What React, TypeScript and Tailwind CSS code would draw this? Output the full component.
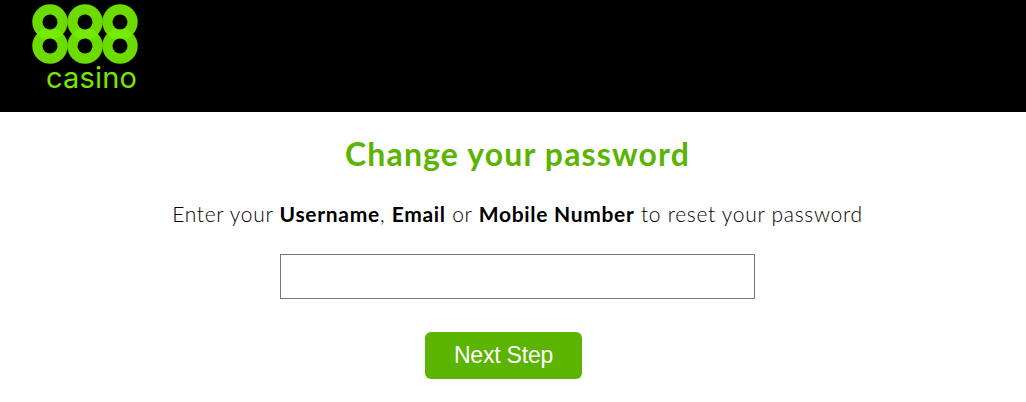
const rings = [
  { cx: 50, cy: 22 },
  { cx: 85, cy: 22 },
  { cx: 120, cy: 22 },
  { cx: 50, cy: 46 },
  { cx: 85, cy: 46 },
  { cx: 120, cy: 46 },
];

function Logo() {
  return (
    <div className="relative h-[112px] w-[170px]">
      <svg width="170" height="70" viewBox="0 0 170 70" className="block">
        {rings.map((r) => (
          <circle key={`o-${r.cx}-${r.cy}`} cx={r.cx} cy={r.cy} r="17.75" fill="#6cdc00" />
        ))}
        <path
          d="M37 34A17.75 17.75 0 0 1 63 34A17.75 17.75 0 0 1 37 34Z M72 34A17.75 17.75 0 0 1 98 34A17.75 17.75 0 0 1 72 34Z M107 34A17.75 17.75 0 0 1 133 34A17.75 17.75 0 0 1 107 34Z"
          fill="#74ec00"
        />
        {rings.map((r) => (
          <circle key={`i-${r.cx}-${r.cy}`} cx={r.cx} cy={r.cy} r="7.5" fill="#000" />
        ))}
      </svg>
      <span className="absolute left-[46px] top-[61px] font-['Inter',sans-serif] text-[29px] leading-[34px] font-normal tracking-[0.2px] text-[#74e800]">
        casino
      </span>
    </div>
  );
}

export default function App() {
  return (
    <div className="min-h-[402px] bg-white font-['Lato',sans-serif]">
      <header className="h-[112px] bg-black">
        <Logo />
      </header>

      <main className="flex flex-col items-center pl-[9px]">
        <h1 className="mt-[23px] text-[32px] leading-[38px] font-bold tracking-[1.15px] text-[#5ab400]">
          Change your password
        </h1>
        <p className="mt-[29px] text-[21px] leading-[24px] font-light tracking-[0.7px] text-black">
          Enter your <strong className="font-bold">Username</strong>,{" "}
          <strong className="font-bold">Email</strong> or{" "}
          <strong className="font-bold">Mobile Number</strong> to reset your password
        </p>
        <input
          type="text"
          className="mt-[28px] h-[45px] w-[475px] border border-[#767676] bg-white"
        />
        <button className="mt-[33px] mr-[28px] h-[47px] w-[157px] rounded-[6px] bg-[#5ab400] font-['Liberation_Sans',sans-serif] text-[23px] tracking-[-0.2px] text-white">
          Next Step
        </button>
      </main>
    </div>
  );
}
